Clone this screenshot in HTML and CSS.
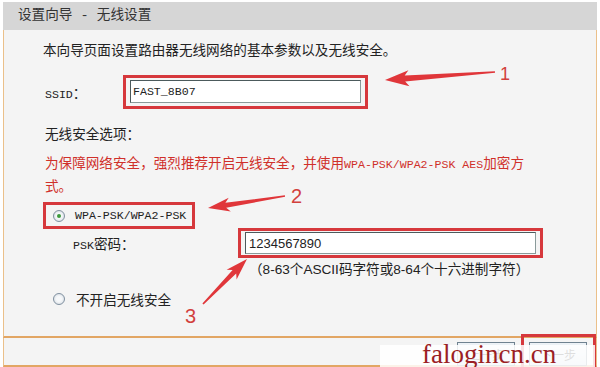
FILE: index.html
```html
<!DOCTYPE html>
<html lang="zh-CN">
<head>
    <meta charset="UTF-8">
    <title>设置向导 - 无线设置</title>
    <link rel="stylesheet" href="styles.css">
</head>
<body>
    <div class="wizard">
        <div class="title">设置向导 - 无线设置</div>
        <div class="panel">
            <p class="intro">本向导页面设置路由器无线网络的基本参数以及无线安全。</p>

            <div class="row ssid-row">
                <span class="label ssid-label"><span class="mono">SSID</span>：</span>
                <div class="mark ssid-mark">
                    <div class="field mono">FAST_8B07</div>
                </div>
            </div>

            <p class="section">无线安全选项：</p>
            <p class="warn">为保障网络安全，强烈推荐开启无线安全，并使用<span class="mono">WPA-PSK/WPA2-PSK AES</span>加密方式。</p>

            <div class="mark radio-mark">
                <span class="radio checked"></span>
                <span class="mono">WPA-PSK/WPA2-PSK</span>
            </div>

            <div class="row psk-row">
                <span class="label psk-label"><span class="mono">PSK</span>密码：</span>
                <div class="mark psk-mark">
                    <div class="field sans">1234567890</div>
                </div>
            </div>
            <p class="hint">（8-63个ASCII码字符或8-64个十六进制字符）</p>

            <div class="row off-row">
                <span class="radio"></span>
                <span>不开启无线安全</span>
            </div>
        </div>
        <div class="footer">
            <button class="btn">上一步</button>
            <div class="mark next-mark">
                <button class="btn">下一步</button>
            </div>
        </div>
    </div>

    <!-- annotation arrows -->
    <svg class="notes" width="600" height="367" viewBox="0 0 600 367">
        <polygon points="385,80 409.5,86.2 405.2,81.5 495.1,72.8 494.9,71.2 404.7,75.6 408.4,70.3"/>
        <polygon points="208,208 230.8,211.5 226.2,207.7 285.1,196.8 284.9,195.2 225.4,202.8 228.7,197.7"/>
        <polygon points="247,259 236.6,279.6 236.2,273.6 203.6,304.6 202.4,303.4 232.6,270.1 226.6,269.8"/>
        <text x="500" y="80" font-size="18">1</text>
        <text x="291" y="203" font-size="20">2</text>
        <text x="185" y="323" font-size="20">3</text>
    </svg>

    <div class="watermark">falogincn.cn</div>
</body>
</html>
```

FILE: styles.css
```css
body {
    margin: 0;
    width: 600px;
    height: 367px;
    overflow: hidden;
    position: relative;
    background: #fff;
    font-family: "Noto Sans CJK SC", sans-serif;
    font-size: 13.6px;
    color: #222;
}
p {
    margin: 0;
}
.mono {
    font-family: "Liberation Mono", "Noto Sans CJK SC", monospace;
    font-size: 11.6px;
}
.sans {
    font-family: "Liberation Sans", sans-serif;
    font-size: 13px;
}
.wizard {
    width: 594px;
    margin: 2px 0 0 3px;
}
.title {
    height: 28px;
    line-height: 28px;
    padding-left: 15px;
    background: #d6d6d6;
    color: #333;
    font-family: "Liberation Mono", "Noto Sans CJK SC", monospace;
}
.panel {
    background: #f4f4f4;
    border-left: 1px solid #ebc08a;
    border-right: 1px solid #ebc08a;
    border-bottom: 2px solid #e2a664;
    padding: 9px 0 27px 39px;
}
.intro {
    line-height: 20px;
}
.section {
    margin-top: 14px;
    padding-left: 2px;
    line-height: 20px;
}
.warn {
    margin-top: 9px;
    width: 496px;
    padding-left: 2px;
    line-height: 20px;
    color: #d0302a;
}
.row {
    display: flex;
    align-items: center;
}
.label {
    flex: none;
}
.mark {
    border: 3px solid #d6383c;
    box-sizing: border-box;
}
.field {
    height: 23px;
    line-height: 21px;
    box-sizing: border-box;
    padding-left: 2px;
    background: #fff;
    border: 1px solid #4c5a5c;
    border-right-color: #8a9a9a;
    border-bottom-color: #8a9a9a;
}
.ssid-row {
    margin-top: 16px;
}
.ssid-label {
    width: 78px;
    padding-left: 2px;
}
.ssid-mark {
    width: 245px;
    padding: 2px 4px 3px 4px;
}
.radio-mark {
    margin-top: 7px;
    width: 152px;
    height: 27px;
    display: flex;
    align-items: center;
    gap: 10px;
    padding-left: 7px;
}
.radio {
    width: 12px;
    height: 12px;
    box-sizing: border-box;
    border-radius: 50%;
    border: 1px solid #8090a0;
    background: radial-gradient(circle, #f6f8fa 35%, #cfd6dd 100%);
    display: flex;
    align-items: center;
    justify-content: center;
    flex: none;
}
.radio.checked::after {
    content: "";
    width: 4px;
    height: 4px;
    border-radius: 50%;
    background: #3c9a3c;
}
.psk-row {
    margin-top: -1px;
}
.psk-label {
    width: 165px;
    padding-left: 30px;
}
.psk-mark {
    width: 305px;
    height: 30px;
    padding: 1px 4px;
}
.field.sans {
    height: 22px;
    padding-left: 3px;
}
.hint {
    margin-top: 2px;
    padding-left: 206px;
    line-height: 20px;
    font-family: "Liberation Sans", "Noto Sans CJK SC", sans-serif;
    font-size: 13.6px;
}
.off-row {
    margin-top: 9px;
    height: 20px;
    padding-left: 10px;
    gap: 11px;
}
.footer {
    height: 27px;
    background: #f4f4f4;
    border-left: 1px solid #ebc08a;
    border-right: 1px solid #ebc08a;
    border-bottom: 2px solid #e2a664;
    display: flex;
    justify-content: flex-end;
    align-items: flex-start;
    gap: 6px;
}
.btn {
    width: 58px;
    height: 24px;
    margin-top: 4px;
    padding: 0;
    font-family: "Noto Sans CJK SC", sans-serif;
    font-size: 12px;
    color: #222;
    background: linear-gradient(#eef3f7, #cfdbe5);
    border: 1px solid #6f8290;
}
.next-mark {
    margin-top: -4px;
    padding: 5px 6px 5px 5px;
}
.next-mark .btn {
    margin-top: 0;
}
.notes {
    position: absolute;
    left: 0;
    top: 0;
    pointer-events: none;
}
.notes polygon {
    fill: #e0363a;
}
.notes text {
    fill: #d2403c;
    font-family: "Liberation Sans", sans-serif;
}
.watermark {
    position: absolute;
    left: 380px;
    top: 345px;
    width: 215px;
    height: 24px;
    box-sizing: border-box;
    padding-left: 42px;
    background: rgba(255, 255, 255, 0.85);
    font-family: "Liberation Serif", "DejaVu Serif", serif;
    font-size: 27px;
    line-height: 18px;
    color: #9c1f24;
}
```
